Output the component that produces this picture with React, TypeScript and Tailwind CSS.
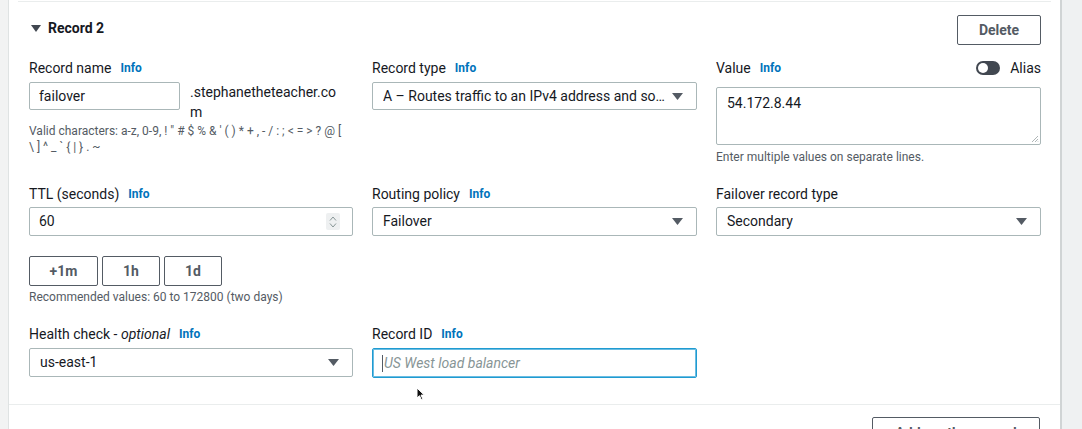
import { ReactNode } from "react";

const FONT = "font-['Roboto','Liberation_Sans',sans-serif]";

function Info() {
  return <span className="text-[12px] font-bold text-[#0073bb]">Info</span>;
}

function Label({ children, info = true }: { children: ReactNode; info?: boolean }) {
  return (
    <div className="flex h-[20px] items-center gap-[9px] text-[14px] text-[#16191f]">
      <span>{children}</span>
      {info ? <Info /> : null}
    </div>
  );
}

function Caret() {
  return (
    <svg width="11" height="7" viewBox="0 0 11 7" className="shrink-0">
      <path d="M0 0 H11 L5.5 7 Z" fill="#545b64" />
    </svg>
  );
}

function Select({ value, className = "" }: { value: string; className?: string }) {
  return (
    <div
      className={`flex items-center justify-between rounded-[2px] border border-[#aab7b8] bg-white pl-[10px] pr-[13px] text-[14px] text-[#16191f] ${className}`}
    >
      <span className="truncate">{value}</span>
      <Caret />
    </div>
  );
}

function Button({ children, className = "" }: { children: ReactNode; className?: string }) {
  return (
    <button
      type="button"
      className={`flex items-center justify-center rounded-[2px] border border-[#545b64] bg-white text-[14px] font-bold text-[#545b64] ${className}`}
    >
      {children}
    </button>
  );
}

export default function App() {
  return (
    <div className={`flex h-[429px] w-[1082px] overflow-hidden bg-white ${FONT}`}>
      <div className="w-[9px] shrink-0 border-r border-[#dfe3e3] bg-[#f2f3f3]" />

      <div className="relative flex-1">
        <div className="mx-[9px] h-[2px] border-b border-[#eaeded]" />

        <div className="flex items-start justify-between pl-[22px] pr-[19px] pt-[13px]">
          <div className="mt-[3px] flex items-center gap-[7px]">
            <svg width="10" height="7" viewBox="0 0 10 7">
              <path d="M0 0 H10 L5 7 Z" fill="#414750" />
            </svg>
            <span className="text-[14px] font-bold text-[#16191f]">Record 2</span>
          </div>
          <Button className="h-[30px] w-[84px]">Delete</Button>
        </div>

        <div className="mt-[13px] grid grid-cols-[324px_325px_325px] gap-x-[19px] pl-[20px]">
          <div>
            <Label>Record name</Label>
            <div className="mt-[4px] flex items-start">
              <div className="flex h-[28px] w-[151px] items-center rounded-[2px] border border-[#aab7b8] pl-[9px] text-[14px] text-[#16191f]">
                failover
              </div>
              <div className="ml-[10px] w-[148px] break-all text-[14px] leading-[20px] text-[#16191f]">
                .stephanetheteacher.com
              </div>
            </div>
            <p className="mt-[1px] text-[12px] leading-[16px] text-[#545b64]">
              Valid characters: a-z, 0-9, ! &quot; # $ % &amp; &apos; ( ) * + , - / : ; &lt; = &gt; ? @ [
              <br />
              \ ] ^ _ ` {"{"} | {"}"} . ~
            </p>
          </div>

          <div>
            <Label>Record type</Label>
            <Select className="mt-[4px] h-[28px]" value="A – Routes traffic to an IPv4 address and so…" />
          </div>

          <div>
            <div className="flex h-[20px] items-center justify-between">
              <Label>Value</Label>
              <div className="flex items-center gap-[10px]">
                <div className="flex h-[14px] w-[24px] items-center rounded-full bg-[#414750] pl-[2px]">
                  <div className="h-[10px] w-[10px] rounded-full bg-white" />
                </div>
                <span className="text-[14px] text-[#16191f]">Alias</span>
              </div>
            </div>
            <div className="relative mt-[9px] h-[58px] rounded-[2px] border border-[#aab7b8] pl-[10px] pt-[5px] text-[14px] text-[#16191f]">
              54.172.8.44
              <svg width="8" height="8" viewBox="0 0 8 8" className="absolute bottom-[1px] right-[1px]">
                <path d="M7 1 L1 7 M7 4 L4 7 M7 6.5 L6.5 7" stroke="#9aa3a4" strokeWidth="0.8" />
              </svg>
            </div>
            <p className="mt-[4px] text-[12px] leading-[16px] text-[#545b64]">
              Enter multiple values on separate lines.
            </p>
          </div>
        </div>

        <div className="mt-[19px] grid grid-cols-[324px_325px_325px] gap-x-[19px] pl-[20px]">
          <div>
            <Label>TTL (seconds)</Label>
            <div className="mt-[3px] flex h-[29px] items-center justify-between rounded-[2px] border border-[#aab7b8] pl-[9px] pr-[12px] text-[14px] text-[#16191f]">
              <span>60</span>
              <div className="flex h-[17px] w-[14px] flex-col items-center justify-center gap-[2px] rounded-[2px] bg-[#eef0f1]">
                <svg width="8" height="5" viewBox="0 0 8 5">
                  <path d="M1 4.5 L4 1 L7 4.5" stroke="#879596" fill="none" strokeWidth="1" />
                </svg>
                <svg width="8" height="5" viewBox="0 0 8 5">
                  <path d="M1 0.5 L4 4 L7 0.5" stroke="#879596" fill="none" strokeWidth="1" />
                </svg>
              </div>
            </div>
            <div className="mt-[20px] flex gap-[4px]">
              <Button className="h-[30px] w-[69px]">+1m</Button>
              <Button className="h-[30px] w-[58px]">1h</Button>
              <Button className="h-[30px] w-[58px]">1d</Button>
            </div>
            <p className="mt-[3px] text-[12px] leading-[16px] text-[#545b64]">
              Recommended values: 60 to 172800 (two days)
            </p>
          </div>

          <div>
            <Label>Routing policy</Label>
            <Select className="mt-[3px] h-[29px]" value="Failover" />
          </div>

          <div>
            <Label info={false}>Failover record type</Label>
            <Select className="mt-[3px] h-[29px]" value="Secondary" />
          </div>
        </div>

        <div className="mt-[19px] grid grid-cols-[324px_325px_325px] gap-x-[19px] pl-[20px]">
          <div>
            <Label>
              Health check - <i>optional</i>
            </Label>
            <Select className="mt-[4px] h-[29px]" value="us-east-1" />
          </div>

          <div>
            <Label>Record ID</Label>
            <div className="mt-[4px] flex h-[30px] items-center rounded-[2px] border border-[#1f9bd1] pl-[9px] text-[14px] italic text-[#879596] shadow-[inset_0_0_0_1px_#6bbde2]">
              <span className="mr-[1px] h-[17px] w-[1px] bg-[#545b64]" />
              US West load balancer
            </div>
          </div>

          <div />
        </div>

        <div className="mt-[26px] border-t border-[#eaeded]" />

        <div className="mt-[12px] flex justify-end pr-[20px]">
          <Button className="h-[32px] w-[168px] items-start pt-[5px]">Add another record</Button>
        </div>

        <svg width="10" height="14" viewBox="0 0 10 14" className="absolute left-[407px] top-[387px]">
          <path d="M1 1 L1 11 L3.5 8.7 L5.3 12.6 L6.8 11.9 L5 8.1 L8.3 8.1 Z" fill="#111" stroke="#fff" strokeWidth="1" />
        </svg>
      </div>

      <div className="w-[22px] shrink-0 border-l-2 border-[#d0d4d5] bg-[#eff1f2]" />
    </div>
  );
}
